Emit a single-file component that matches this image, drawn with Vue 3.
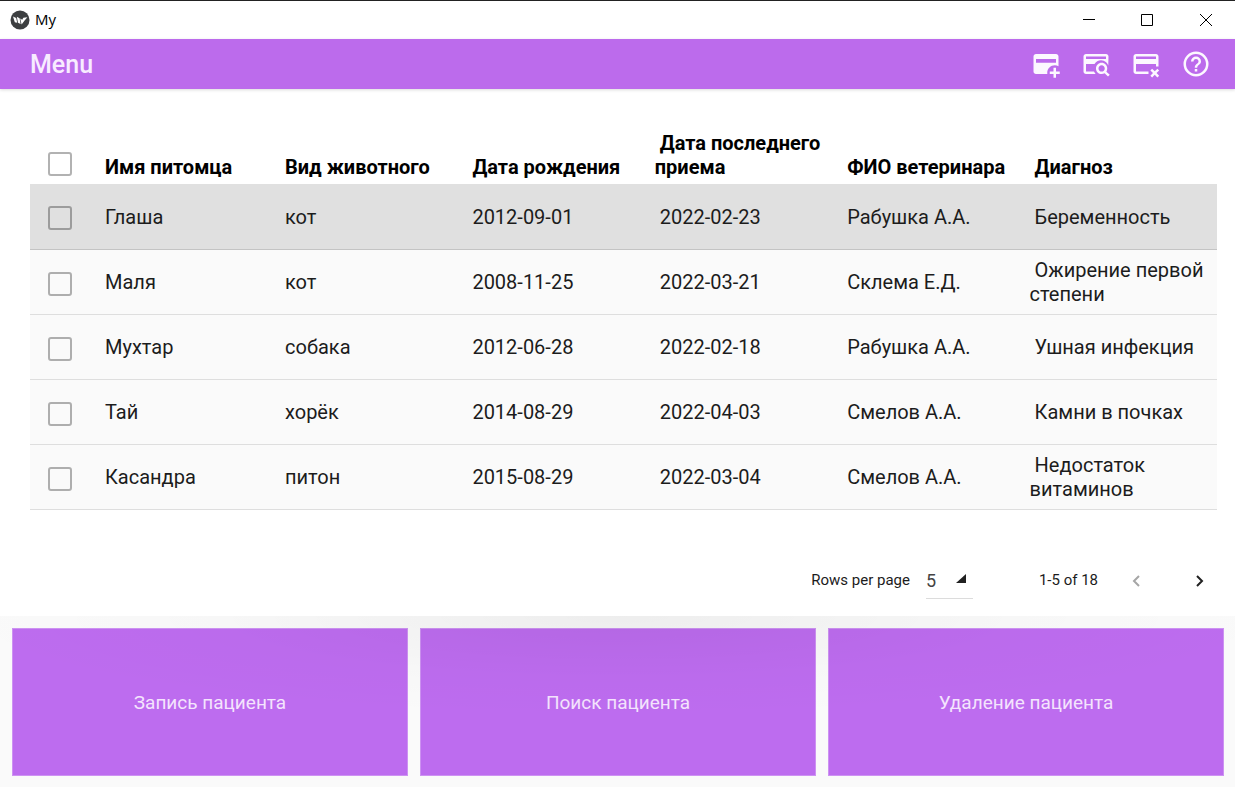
<script setup>
import { ref } from 'vue'

const columns = ['Имя питомца', 'Вид животного', 'Дата рождения', 'Дата последнего приема', 'ФИО ветеринара', 'Диагноз']
const rows = [
  ['Глаша', 'кот', '2012-09-01', '2022-02-23', 'Рабушка А.А.', 'Беременность'],
  ['Маля', 'кот', '2008-11-25', '2022-03-21', 'Склема Е.Д.', 'Ожирение первой степени'],
  ['Мухтар', 'собака', '2012-06-28', '2022-02-18', 'Рабушка А.А.', 'Ушная инфекция'],
  ['Тай', 'хорёк', '2014-08-29', '2022-04-03', 'Смелов А.А.', 'Камни в почках'],
  ['Касандра', 'питон', '2015-08-29', '2022-03-04', 'Смелов А.А.', 'Недостаток витаминов'],
]
const actions = ['Запись пациента', 'Поиск пациента', 'Удаление пациента']
const current = ref(0)
const perPage = ref('5')
</script>

<template>
  <div class="window">
    <header class="titlebar">
      <svg class="logo" viewBox="0 0 20 20" aria-hidden="true">
        <circle cx="10" cy="10" r="9.5" fill="#3c3e40" />
        <path d="M3 6.6 6.2 8 7.2 12.8 4.8 12.2ZM6.8 6.8 9.6 8.2 10.6 14 8 12.8ZM10.2 8.6 12.2 9.8 13.4 7.8 17.4 7.2 14.6 10.6 11.6 14.4Z" fill="#fff" />
      </svg>
      <span class="caption">My</span>
      <div class="controls">
        <button type="button" aria-label="Minimize"><svg viewBox="0 0 12 12"><path d="M0 5.5H12" /></svg></button>
        <button type="button" aria-label="Maximize"><svg viewBox="0 0 12 12"><path d="M.5 .5H11.5V11.5H.5Z" /></svg></button>
        <button type="button" aria-label="Close"><svg viewBox="0 0 12 12"><path d="M0 0 12 12M12 0 0 12" /></svg></button>
      </div>
    </header>

    <nav class="toolbar">
      <h1>Menu</h1>
      <div class="tools">
        <button type="button" aria-label="Add">
          <svg viewBox="0 0 24 24"><path d="M20 4H4C2.9 4 2 4.9 2 6V18C2 19.1 2.9 20 4 20H13.1C13 19.7 13 19.3 13 19C13 15.7 15.7 13 19 13C20.1 13 21.1 13.3 22 13.8V6C22 4.9 21.1 4 20 4M20 11H4V8H20V11M20 15V18H23V20H20V23H18V20H15V18H18V15H20Z" /></svg>
        </button>
        <button type="button" aria-label="Search">
          <svg viewBox="0 0 24 24"><path d="M20 4H4C2.9 4 2 4.9 2 6V18C2 19.1 2.9 20 4 20H11.7C11.2 19.4 10.7 18.7 10.4 18H4V12H10.8C11.9 10.2 13.8 9 16 9C17.6 9 19 9.6 20.1 10.6C20.9 11.3 21.5 12.2 21.8 13.2L22 6C22 4.9 21.1 4 20 4M20 8H4V6H20V8M20.3 18.1C20.7 17.4 21 16.5 21 15.5C21 13 19 11 16.5 11S12 13 12 15.5 14 20 16.5 20C17.4 20 18.2 19.8 18.9 19.4L21.6 22 23 20.6 20.3 18.1M16.5 18C15.1 18 14 16.9 14 15.5S15.1 13 16.5 13 19 14.1 19 15.5 17.9 18 16.5 18Z" /></svg>
        </button>
        <button type="button" aria-label="Remove">
          <svg viewBox="0 0 24 24"><path d="M4 4H20C21.1 4 22 4.9 22 6V14H20V12H4V18H14V20H4C2.9 20 2 19.1 2 18V6C2 4.9 2.9 4 4 4M4 6V8H20V6H4M22.5 17.1 20.4 19.2 22.5 21.3 21.1 22.7 19 20.6 16.9 22.7 15.5 21.3 17.6 19.2 15.5 17.1 16.9 15.7 19 17.8 21.1 15.7Z" /></svg>
        </button>
        <button type="button" aria-label="Help">
          <svg viewBox="0 0 24 24"><path d="M11 18H13V16H11V18M12 2A10 10 0 0 0 2 12A10 10 0 0 0 12 22A10 10 0 0 0 22 12A10 10 0 0 0 12 2M12 20C7.59 20 4 16.41 4 12C4 7.59 7.59 4 12 4C16.41 4 20 7.59 20 12C20 16.41 16.41 20 12 20M12 6A4 4 0 0 0 8 10H10A2 2 0 0 1 12 8A2 2 0 0 1 14 10C14 12 11 11.75 11 15H13C13 12.75 16 12.5 16 10A4 4 0 0 0 12 6Z" /></svg>
        </button>
      </div>
    </nav>

    <main class="card">
      <table>
        <colgroup>
          <col class="col-check" />
          <col class="col-name" />
          <col v-for="n in 5" :key="n" />
        </colgroup>
        <thead>
          <tr>
            <th class="check"><input type="checkbox" aria-label="Select all" /></th>
            <th v-for="c in columns" :key="c" scope="col">{{ c }}</th>
          </tr>
        </thead>
        <tbody>
          <tr v-for="(row, i) in rows" :key="i" :class="{ current: i === current }" @click="current = i">
            <td class="check"><input type="checkbox" :aria-label="row[0]" /></td>
            <td v-for="(cell, j) in row" :key="j">{{ cell }}</td>
          </tr>
        </tbody>
      </table>

      <footer class="pager">
        <label for="per-page">Rows per page</label>
        <div class="select">
          <select id="per-page" v-model="perPage">
            <option>5</option>
            <option>10</option>
          </select>
          <svg viewBox="0 0 10 9" aria-hidden="true"><path d="M10 0V9H0Z" /></svg>
        </div>
        <span class="range">1-5 of 18</span>
        <button type="button" class="prev" aria-label="Previous page" disabled><svg viewBox="0 0 8 12"><path d="M7 1 2 6 7 11" /></svg></button>
        <button type="button" class="next" aria-label="Next page"><svg viewBox="0 0 8 12"><path d="M1 1 6 6 1 11" /></svg></button>
      </footer>
    </main>

    <section class="actions">
      <button v-for="a in actions" :key="a" type="button">{{ a }}</button>
    </section>
  </div>
</template>

<style>
body {
  margin: 0;
}
</style>

<style scoped>
.window {
  box-sizing: border-box;
  min-height: 100vh;
  display: flex;
  flex-direction: column;
  background: #fff;
  color: #1c1c1c;
  font-family: Roboto, "Liberation Sans", sans-serif;
}
button {
  margin: 0;
  padding: 0;
  border: 0;
  background: none;
  font-family: inherit;
}
svg {
  display: block;
}
.titlebar {
  box-sizing: border-box;
  height: 39px;
  border-top: 1px solid #222;
  padding-left: 10px;
  display: flex;
  align-items: center;
  gap: 5px;
}
.logo {
  width: 20px;
  height: 20px;
}
.caption {
  padding-bottom: 2px;
  font-family: "Open Sans", "Noto Sans", sans-serif;
  font-size: 15px;
  color: #000;
}
.controls {
  margin-left: auto;
  display: flex;
}
.controls button {
  width: 58px;
  height: 38px;
  display: grid;
  place-items: center;
}
.controls button:last-child {
  width: 59px;
}
.controls svg {
  width: 12px;
  height: 12px;
  fill: none;
  stroke: #000;
}
.toolbar {
  position: relative;
  box-sizing: border-box;
  height: 50px;
  padding: 0 24px 0 30px;
  display: flex;
  align-items: center;
  justify-content: space-between;
  background: #bc6bec;
  box-shadow: 0 1px 3px rgba(0, 0, 0, 0.15);
}
h1 {
  margin: 0;
  font-size: 25px;
  font-weight: 500;
  color: #f8ecff;
}
.tools {
  display: flex;
  gap: 20px;
}
.tools svg {
  width: 30px;
  height: 30px;
  fill: #fcf8ff;
}
.card {
  flex: 1;
  padding: 30px 18px 0 30px;
  display: flex;
  flex-direction: column;
}
table {
  width: 100%;
  table-layout: fixed;
  border-collapse: separate;
  border-spacing: 0;
  font-size: 20px;
  line-height: 24px;
}
.col-check {
  width: 70px;
}
.col-name {
  width: 180px;
}
th,
td {
  padding: 0;
  text-align: left;
  text-indent: 5px;
}
th {
  height: 60px;
  padding-bottom: 5px;
  vertical-align: bottom;
  font-weight: 700;
  color: #000;
}
td {
  box-sizing: border-box;
  height: 65px;
  border-bottom: 1px solid #dedede;
  background: #fafafa;
  vertical-align: middle;
}
.current td {
  height: 66px;
  border-bottom-color: #c4c4c4;
  background: #e0e0e0;
}
.check {
  padding-left: 18px;
  text-indent: 0;
}
input {
  appearance: none;
  display: block;
  box-sizing: border-box;
  width: 24px;
  height: 24px;
  margin: 3px 0 0;
  border: 2px solid rgba(0, 0, 0, 0.3);
  border-radius: 3px;
}
th input {
  margin-bottom: 3px;
}
.pager {
  margin-top: auto;
  padding: 0 13px 17px 0;
  display: flex;
  align-items: center;
  justify-content: flex-end;
  font-size: 15px;
}
.pager label,
.range {
  padding-bottom: 2px;
}
.select {
  width: 47px;
  height: 36px;
  margin-left: 16px;
  display: grid;
  align-items: center;
  border-bottom: 1px solid #dcdcdc;
}
.select select,
.select svg {
  grid-area: 1 / 1;
}
.select select {
  appearance: none;
  width: 100%;
  height: 36px;
  padding: 0;
  border: 0;
  background: none;
  font: inherit;
  font-size: 18px;
  color: #444;
}
.select svg {
  width: 10px;
  height: 9px;
  margin: 0 0 3px 30px;
  pointer-events: none;
  fill: #212121;
}
.range {
  margin-left: 66px;
}
.pager button {
  width: 8px;
  height: 12px;
}
.pager button svg {
  width: 8px;
  height: 12px;
  fill: none;
  stroke: #212121;
  stroke-width: 2;
}
.pager .prev {
  margin-left: 34px;
}
.pager .prev svg {
  stroke: #a6a6a6;
}
.pager .next {
  margin-left: 56px;
}
.actions {
  position: relative;
  padding: 12px 11px 11px 12px;
  display: grid;
  grid-template-columns: repeat(3, 1fr);
  gap: 12px;
  background: #fafafa;
}
.actions::after {
  content: "";
  position: absolute;
  inset: 0;
  pointer-events: none;
  background: radial-gradient(ellipse 55% 60% at 50% 0, rgba(0, 0, 0, 0.05), rgba(0, 0, 0, 0.01) 60%, transparent);
}
.actions button {
  height: 148px;
  background: #bd6cef;
  border: 1px solid #cd92f2;
  font-size: 19px;
  color: #f4e4fd;
}
</style>
